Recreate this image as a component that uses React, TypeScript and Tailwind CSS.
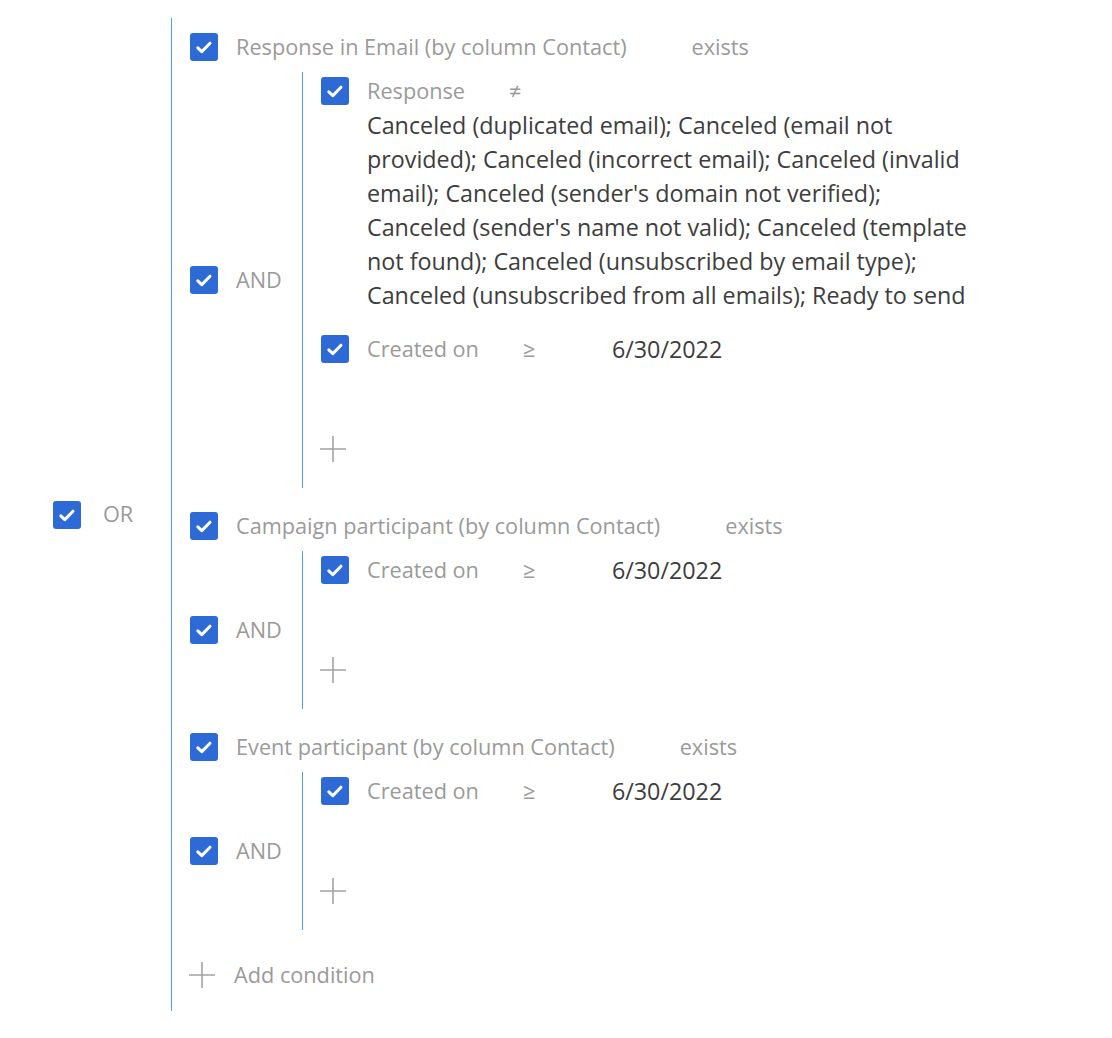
import React from "react";

const font = { fontFamily: '"Open Sans", "Noto Sans", sans-serif' };

function Check() {
  return (
    <span className="flex h-[28px] w-[28px] shrink-0 items-center justify-center rounded-[3px] bg-[#2d6ad6]">
      <svg width="18" height="18" viewBox="0 0 18 18" fill="none">
        <path d="M2.8 9.8l4 3.8 8.2-8.4" stroke="white" strokeWidth="3" strokeLinecap="round" strokeLinejoin="round" />
      </svg>
    </span>
  );
}

function Plus({ size = 28 }: { size?: number }) {
  return (
    <svg width={size} height={size} viewBox="0 0 28 28" fill="none">
      <path d="M14 1v26M1 14h26" stroke="#a3a3a3" strokeWidth="1.6" />
    </svg>
  );
}

type Cond = { label: string; op: string; value: string; wrap?: boolean };

function Condition({ c }: { c: Cond }) {
  if (c.wrap) {
    return (
      <div className="mb-[2px]">
        <div className="flex h-[38px] items-center pl-[18px]">
          <Check />
          <span className="ml-[18px] text-[#9a9a9a]">{c.label}</span>
          <span className="ml-[44px] text-[#9a9a9a]">{c.op}</span>
        </div>
        <div className="-mt-[2px] ml-[64px] w-[610px] text-[23.3px] leading-[34px] text-[#3d3d3d]">{c.value}</div>
      </div>
    );
  }
  return (
    <div className="flex h-[38px] items-center pl-[18px]">
      <Check />
      <span className="ml-[18px] text-[#9a9a9a]">{c.label}</span>
      <span className="ml-[44px] w-[89px] text-[#9a9a9a]">{c.op}</span>
      <span className="text-[23.3px] text-[#3d3d3d]">{c.value}</span>
    </div>
  );
}

function Group({ title, conds, first }: { title: string; conds: Cond[]; first?: boolean }) {
  return (
    <div className={first ? "" : "mt-[13px]"}>
      <div className="flex h-[50px] items-center pl-[18px]">
        <Check />
        <span className="ml-[18px] text-[#9a9a9a]">{title}</span>
        <span className="ml-[65px] text-[#9a9a9a]">exists</span>
      </div>
      <div className="flex">
        <div className="flex w-[130px] items-center pl-[18px]">
          <Check />
          <span className="ml-[18px] text-[#9a9a9a]">AND</span>
        </div>
        <div className="border-l border-[#4ea6e0] pb-[19px]">
          <div className="flex flex-col gap-[16px]">
            {conds.map((c) => (
              <Condition key={c.label} c={c} />
            ))}
          </div>
          <div className="mt-[61px] flex h-[40px] items-center pl-[16px]">
            <Plus />
          </div>
        </div>
      </div>
    </div>
  );
}

const created: Cond = { label: "Created on", op: "≥", value: "6/30/2022" };

export default function App() {
  return (
    <div className="h-[1038px] w-[1112px] bg-white pt-[18px] pl-[53px] text-[21.7px]" style={font}>
      <div className="flex">
        <div className="flex w-[118px] items-center">
          <Check />
          <span className="ml-[22px] text-[#9a9a9a]">OR</span>
        </div>
        <div className="border-l border-[#4ea6e0] pt-[4px] pb-[16px]">
          <Group
            first
            title="Response in Email (by column Contact)"
            conds={[
              {
                label: "Response",
                op: "≠",
                wrap: true,
                value:
                  "Canceled (duplicated email); Canceled (email not provided); Canceled (incorrect email); Canceled (invalid email); Canceled (sender's domain not verified); Canceled (sender's name not valid); Canceled (template not found); Canceled (unsubscribed by email type); Canceled (unsubscribed from all emails); Ready to send",
              },
              created,
            ]}
          />
          <Group title="Campaign participant (by column Contact)" conds={[created]} />
          <Group title="Event participant (by column Contact)" conds={[created]} />
          <div className="mt-[25px] flex h-[40px] items-center pl-[16px]">
            <Plus />
            <span className="ml-[18px] text-[#9a9a9a]">Add condition</span>
          </div>
        </div>
      </div>
    </div>
  );
}
